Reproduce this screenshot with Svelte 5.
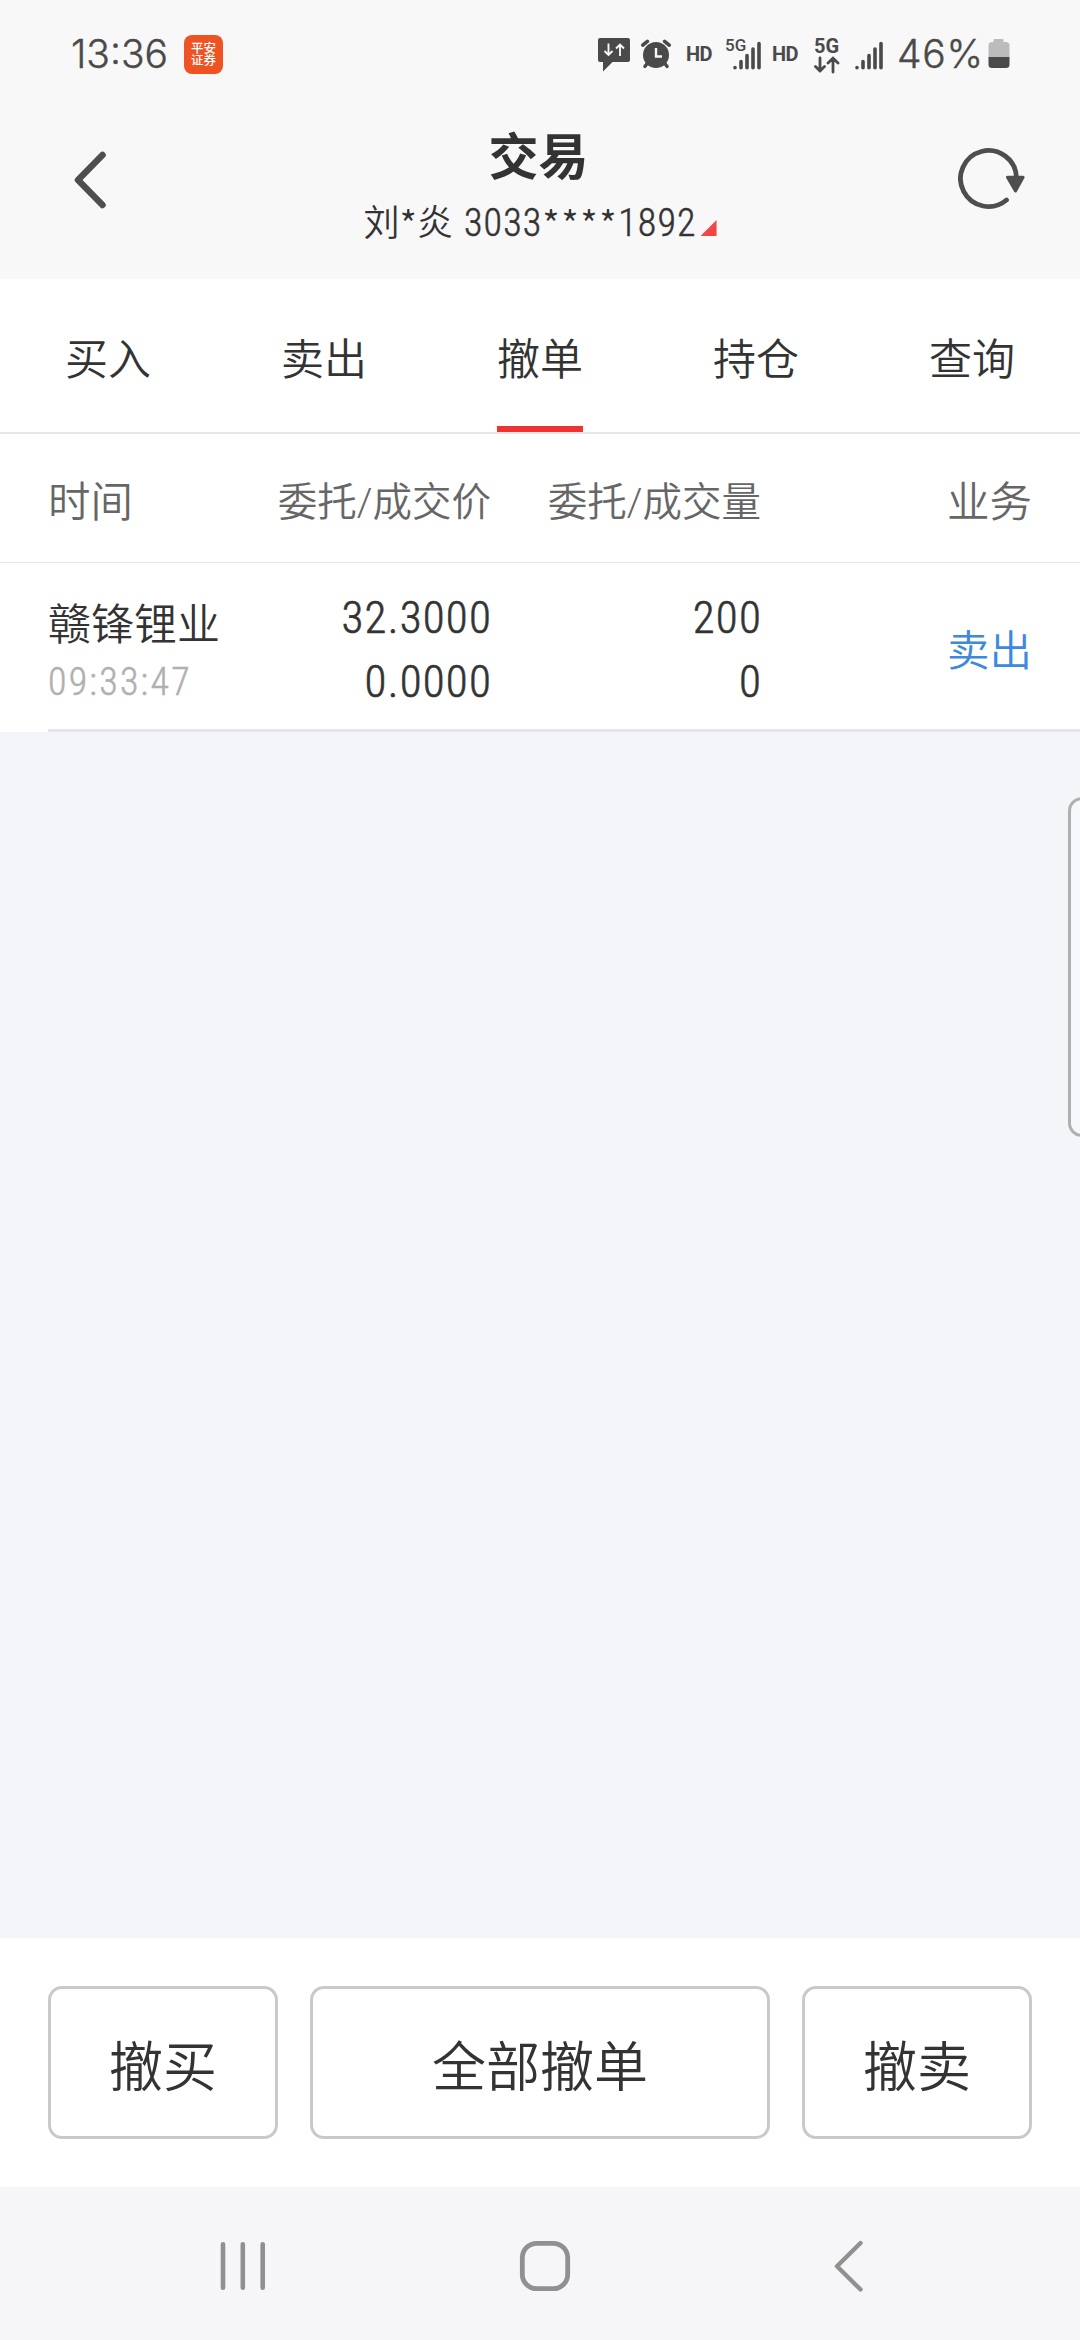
<script lang="ts">
  interface Order {
    name: string;
    time: string;
    price: string;
    dealPrice: string;
    amount: string;
    dealAmount: string;
    side: string;
  }

  const tabs = ['买入', '卖出', '撤单', '持仓', '查询'];
  const orders: Order[] = [
    {
      name: '赣锋锂业',
      time: '09:33:47',
      price: '32.3000',
      dealPrice: '0.0000',
      amount: '200',
      dealAmount: '0',
      side: '卖出',
    },
  ];

  let active = $state('撤单');
</script>

{#snippet signal()}
  <path d="M2 26.5v.2M8 20.5v6.2M14 14.5v12.2M20 8v18.7M26 2.5v24.2" />
{/snippet}

<div class="screen">
  <div class="status">
    <span class="clock">13:36</span>
    <span class="app-badge">平安证券</span>
    <div class="indicators">
      <svg class="chat" width="32" height="34" viewBox="0 0 32 34">
        <path d="M2 0h28a2 2 0 0 1 2 2v20a2 2 0 0 1-2 2H14.500l-9.500 9.500V24H2a2 2 0 0 1-2-2V2a2 2 0 0 1 2-2z" fill="#4a4a4a" />
        <path d="M10.500 5.500v11.500M6.500 13l4 4 4-4M22 18V6.500M18 10.500l4-4 4 4" fill="none" stroke="#f8f8f8" stroke-width="1.900" />
      </svg>
      <svg class="alarm" width="30" height="30" viewBox="0 0 30 30">
        <circle cx="15" cy="16" r="13" fill="#4a4a4a" />
        <path d="M1.800 6.200l4.600-3.900M28.200 6.200l-4.600-3.900" stroke="#4a4a4a" stroke-width="3.600" stroke-linecap="round" />
        <path d="M6.500 24l-2.600 3.500M23.500 24l2.600 3.500" stroke="#4a4a4a" stroke-width="3.400" stroke-linecap="round" />
        <path d="M15 9v8.500h6" fill="none" stroke="#f8f8f8" stroke-width="2.400" />
      </svg>
      <span class="hd first">HD</span>
      <div class="net">
        <span class="g small">5G</span>
        <svg class="bars" width="29" height="30" viewBox="0 0 29 30">{@render signal()}</svg>
      </div>
      <span class="hd second">HD</span>
      <div class="net5g">
        <span class="g">5G</span>
        <svg width="26" height="18" viewBox="0 0 26 18">
          <path d="M6 2v13M1.500 10.500L6 15l4.500-4.500M19 16V3M14 7l5-4.800 5 4.800" fill="none" stroke="#4a4a4a" stroke-width="2.800" stroke-linecap="round" />
        </svg>
      </div>
      <svg class="sig bars" width="29" height="30" viewBox="0 0 29 30">{@render signal()}</svg>
      <span class="percent">46%</span>
      <svg class="battery" width="22" height="30" viewBox="0 0 22 30">
        <path d="M6.500 0h8a1 1 0 0 1 1 1v2H18a3.500 3.500 0 0 1 3.500 3.500V18.500H.5V6.500A3.500 3.500 0 0 1 4 3h1.500V1a1 1 0 0 1 1-1z" fill="#bcbcbc" />
        <path d="M.5 18h21v7.500A3.500 3.500 0 0 1 18 29H4a3.500 3.500 0 0 1-3.500-3.500z" fill="#4a4a4a" />
      </svg>
    </div>
  </div>

  <header>
    <button class="icon" aria-label="返回">
      <svg width="34" height="60" viewBox="0 0 34 60">
        <path d="M29.500 5L5 30l24.500 25" fill="none" stroke="#4e4e4e" stroke-width="6.500" stroke-linecap="round" stroke-linejoin="round" />
      </svg>
    </button>
    <div class="heading">
      <h1>交易</h1>
      <p class="account">
        <span>刘<span class="star">*</span>炎</span>
        <span class="no">3033<span class="star">****</span>1892</span>
        <i class="corner"></i>
      </p>
    </div>
    <button class="icon" aria-label="刷新">
      <svg width="70" height="64" viewBox="0 0 70 64">
        <path d="M58.500 30.500A28 28 0 1 0 48.500 53" fill="none" stroke="#4e4e4e" stroke-width="4.800" stroke-linecap="round" />
        <path d="M49.500 30.200h15.600L57.500 44z" fill="#4e4e4e" stroke="#4e4e4e" stroke-width="3" stroke-linejoin="round" />
      </svg>
    </button>
  </header>

  <nav class="tabs">
    {#each tabs as tab (tab)}
      <button class:active={tab === active} onclick={() => (active = tab)}><span>{tab}</span></button>
    {/each}
  </nav>

  <div class="grid head">
    <span class="wide">时间</span>
    <span class="right">委托/成交价</span>
    <span class="right">委托/成交量</span>
    <span class="right wide">业务</span>
  </div>

  {#each orders as order (order.name + order.time)}
    <div class="grid order">
      <div class="stock">
        <span class="name">{order.name}</span>
        <span class="time">{order.time}</span>
      </div>
      <div class="nums">
        <span>{order.price}</span>
        <span>{order.dealPrice}</span>
      </div>
      <div class="nums">
        <span>{order.amount}</span>
        <span>{order.dealAmount}</span>
      </div>
      <span class="side">{order.side}</span>
    </div>
  {/each}

  <div class="blank"></div>

  <div class="actions">
    <button>撤买</button>
    <button>全部撤单</button>
    <button>撤卖</button>
  </div>

  <div class="sysnav">
    <svg width="48" height="52" viewBox="0 0 48 52">
      <path d="M4 4.200v43.600M23.800 4.200v43.600M43.700 4.200v43.600" stroke-width="4.600" />
    </svg>
    <svg class="home" width="52" height="52" viewBox="0 0 52 52">
      <rect x="3.300" y="3.300" width="45.400" height="45.400" rx="14.500" stroke-width="4.800" />
    </svg>
    <svg width="30" height="52" viewBox="0 0 30 52">
      <path d="M26.500 3L3 26.200 26.500 49.500" stroke-width="4.400" />
    </svg>
  </div>

  <div class="edge-handle"></div>
</div>

<style>
  :global(body) {
    margin: 0;
  }
  .screen {
    position: relative;
    display: flex;
    flex-direction: column;
    width: 1080px;
    height: 2340px;
    overflow: hidden;
    background: #f4f5f9;
    color: #333;
    font-family: Roboto, 'Noto Sans CJK SC', sans-serif;
    font-weight: 350;
  }
  button {
    padding: 0;
    border: 0;
    background: none;
    color: inherit;
    font: inherit;
  }
  svg {
    display: block;
    flex: none;
  }

  .status {
    display: flex;
    align-items: flex-start;
    height: 110px;
    padding: 0 70px 0 71px;
    box-sizing: border-box;
    background: #f8f8f8;
    color: #4a4a4a;
  }
  .clock,
  .percent {
    font-family: Inter, sans-serif;
    font-size: 39px;
    font-weight: 360;
    line-height: 48px;
    margin-top: 30px;
    -webkit-text-stroke: 0.4px;
  }
  .clock {
    width: 113px;
    letter-spacing: 0;
  }
  .app-badge {
    width: 25px;
    height: 32px;
    margin-top: 35px;
    padding: 7px 7px 0;
    border-radius: 8px;
    background: #ef5323;
    color: #fff;
    font: 500 12.500px/12px 'Noto Sans CJK SC', sans-serif;
    word-break: break-all;
  }
  .indicators {
    display: flex;
    align-items: flex-start;
    margin-left: auto;
  }
  .chat {
    margin-top: 38px;
  }
  .alarm {
    margin: 39px 0 0 11px;
  }
  .hd {
    width: 28px;
    font-size: 20px;
    font-weight: 700;
    line-height: 24px;
    margin-top: 42px;
    letter-spacing: -0.5px;
  }
  .first {
    margin-left: 15px;
  }
  .second {
    margin-left: 9px;
  }
  .net {
    display: flex;
    width: 38px;
    margin: 34px 0 0 11px;
  }
  .net .bars {
    margin: 7px 0 0 -13px;
  }
  .g {
    display: block;
    font-size: 20px;
    font-weight: 700;
    line-height: 22px;
  }
  .small {
    width: 21px;
    font-size: 17px;
    font-weight: 500;
  }
  .bars {
    fill: none;
    stroke: #4a4a4a;
    stroke-width: 3.6;
    stroke-linecap: round;
  }
  .net5g {
    width: 26px;
    margin: 35px 0 0 14px;
  }
  .net5g svg {
    margin-top: -1px;
  }
  .sig {
    margin: 41px 0 0 15px;
  }
  .percent {
    width: 91px;
    margin-left: 13px;
    letter-spacing: 0.800px;
  }
  .battery {
    margin-top: 39px;
  }

  header {
    display: grid;
    grid-template-columns: 88px 1fr 72px;
    height: 169px;
    padding: 0 50px 0 73px;
    box-sizing: border-box;
    background: #f8f8f8;
  }
  .icon {
    align-self: start;
    margin-top: 37px;
  }
  .icon:first-child {
    margin-top: 40px;
  }
  .heading {
    display: flex;
    flex-direction: column;
    align-items: center;
    padding-right: 42px;
  }
  h1 {
    margin: 9px 0 0;
    font: 700 50px/68px 'Noto Sans CJK SC', sans-serif;
  }
  .account {
    display: flex;
    align-items: baseline;
    margin: 14px 0 0 3px;
    font-size: 36px;
    line-height: 44px;
    gap: 11px;
  }
  .no {
    font-size: 38px;
    font-stretch: 78%;
    letter-spacing: 1.100px;
    -webkit-text-stroke: 0.5px;
  }
  .star {
    font-family: 'Noto Sans CJK SC', sans-serif;
    font-size: 38px;
    line-height: 1;
    vertical-align: -3px;
    -webkit-text-stroke: 0;
  }
  .no .star {
    letter-spacing: 1.500px;
  }
  .corner {
    width: 16px;
    height: 16px;
    margin: 0 0 5px -7px;
    background: #f04848;
    clip-path: polygon(100% 0, 100% 100%, 0 100%);
  }

  .tabs {
    display: flex;
    height: 155px;
    box-sizing: border-box;
    border-bottom: 2px solid #e5e5ea;
    background: #fff;
  }
  .tabs button {
    display: flex;
    justify-content: center;
    flex: 1;
    font-size: 43px;
    line-height: 162px;
  }
  .tabs span {
    height: 147px;
  }
  .tabs .active span {
    border-bottom: 6px solid #ed3433;
  }

  .grid {
    display: grid;
    grid-template-columns: 222px 221px 270px 1fr;
    padding: 0 48px;
    background: #fff;
  }
  .head {
    height: 128px;
    border-bottom: 1px solid #e6e6e6;
    color: #666;
    font-size: 39.500px;
    line-height: 138px;
  }
  .wide {
    font-size: 42.500px;
  }
  .right {
    text-align: right;
    white-space: nowrap;
  }
  .order {
    height: 166px;
    padding-right: 0;
    grid-template-columns: 222px 221px 270px 271px;
    background: linear-gradient(#e4e5eb, #e4e5eb) 48px 100% / 1032px 3px no-repeat #fff;
    padding-bottom: 3px;
  }
  .stock {
    display: flex;
    flex-direction: column;
  }
  .name {
    margin-top: 32px;
    font-size: 43px;
    line-height: 60px;
    white-space: nowrap;
  }
  .time {
    margin-top: 5px;
    color: #b0b0b0;
    font-size: 38px;
    font-stretch: 78%;
    line-height: 44px;
    letter-spacing: 2.200px;
    -webkit-text-stroke: 0.5px;
  }
  .nums {
    display: flex;
    flex-direction: column;
    align-items: flex-end;
    padding-top: 23px;
    font-size: 45px;
    font-stretch: 78%;
    line-height: 64px;
    letter-spacing: 1.200px;
    margin-right: -1px;
    -webkit-text-stroke: 0.600px;
  }
  .side {
    color: #3c89dd;
    font-size: 42.500px;
    line-height: 178px;
    text-align: right;
  }

  .blank {
    flex: 1;
  }
  .actions {
    display: grid;
    grid-template-columns: 230px 460px 230px;
    gap: 32px;
    height: 249px;
    padding: 48px;
    box-sizing: border-box;
    background: #fff;
  }
  .actions button {
    border: 3px solid #c9c9c9;
    border-radius: 14px;
    padding-top: 12px;
    font-size: 54px;
    line-height: 135px;
  }
  .sysnav {
    display: flex;
    align-items: flex-start;
    justify-content: space-between;
    height: 153px;
    padding: 53px 216px 0 219px;
    box-sizing: border-box;
    background: #f6f6f8;
  }
  .sysnav svg {
    fill: none;
    stroke: #909090;
    stroke-linecap: round;
    stroke-linejoin: round;
  }
  .sysnav .home {
    margin-right: 11px;
  }
  /* edge panel handle, runs off the right side of the screen */
  .edge-handle {
    position: absolute;
    top: 797px;
    right: -20px;
    width: 26px;
    height: 334px;
    border: 3px solid #b0b0b0;
    border-radius: 14px;
    background: #f7f8fb;
  }
</style>
